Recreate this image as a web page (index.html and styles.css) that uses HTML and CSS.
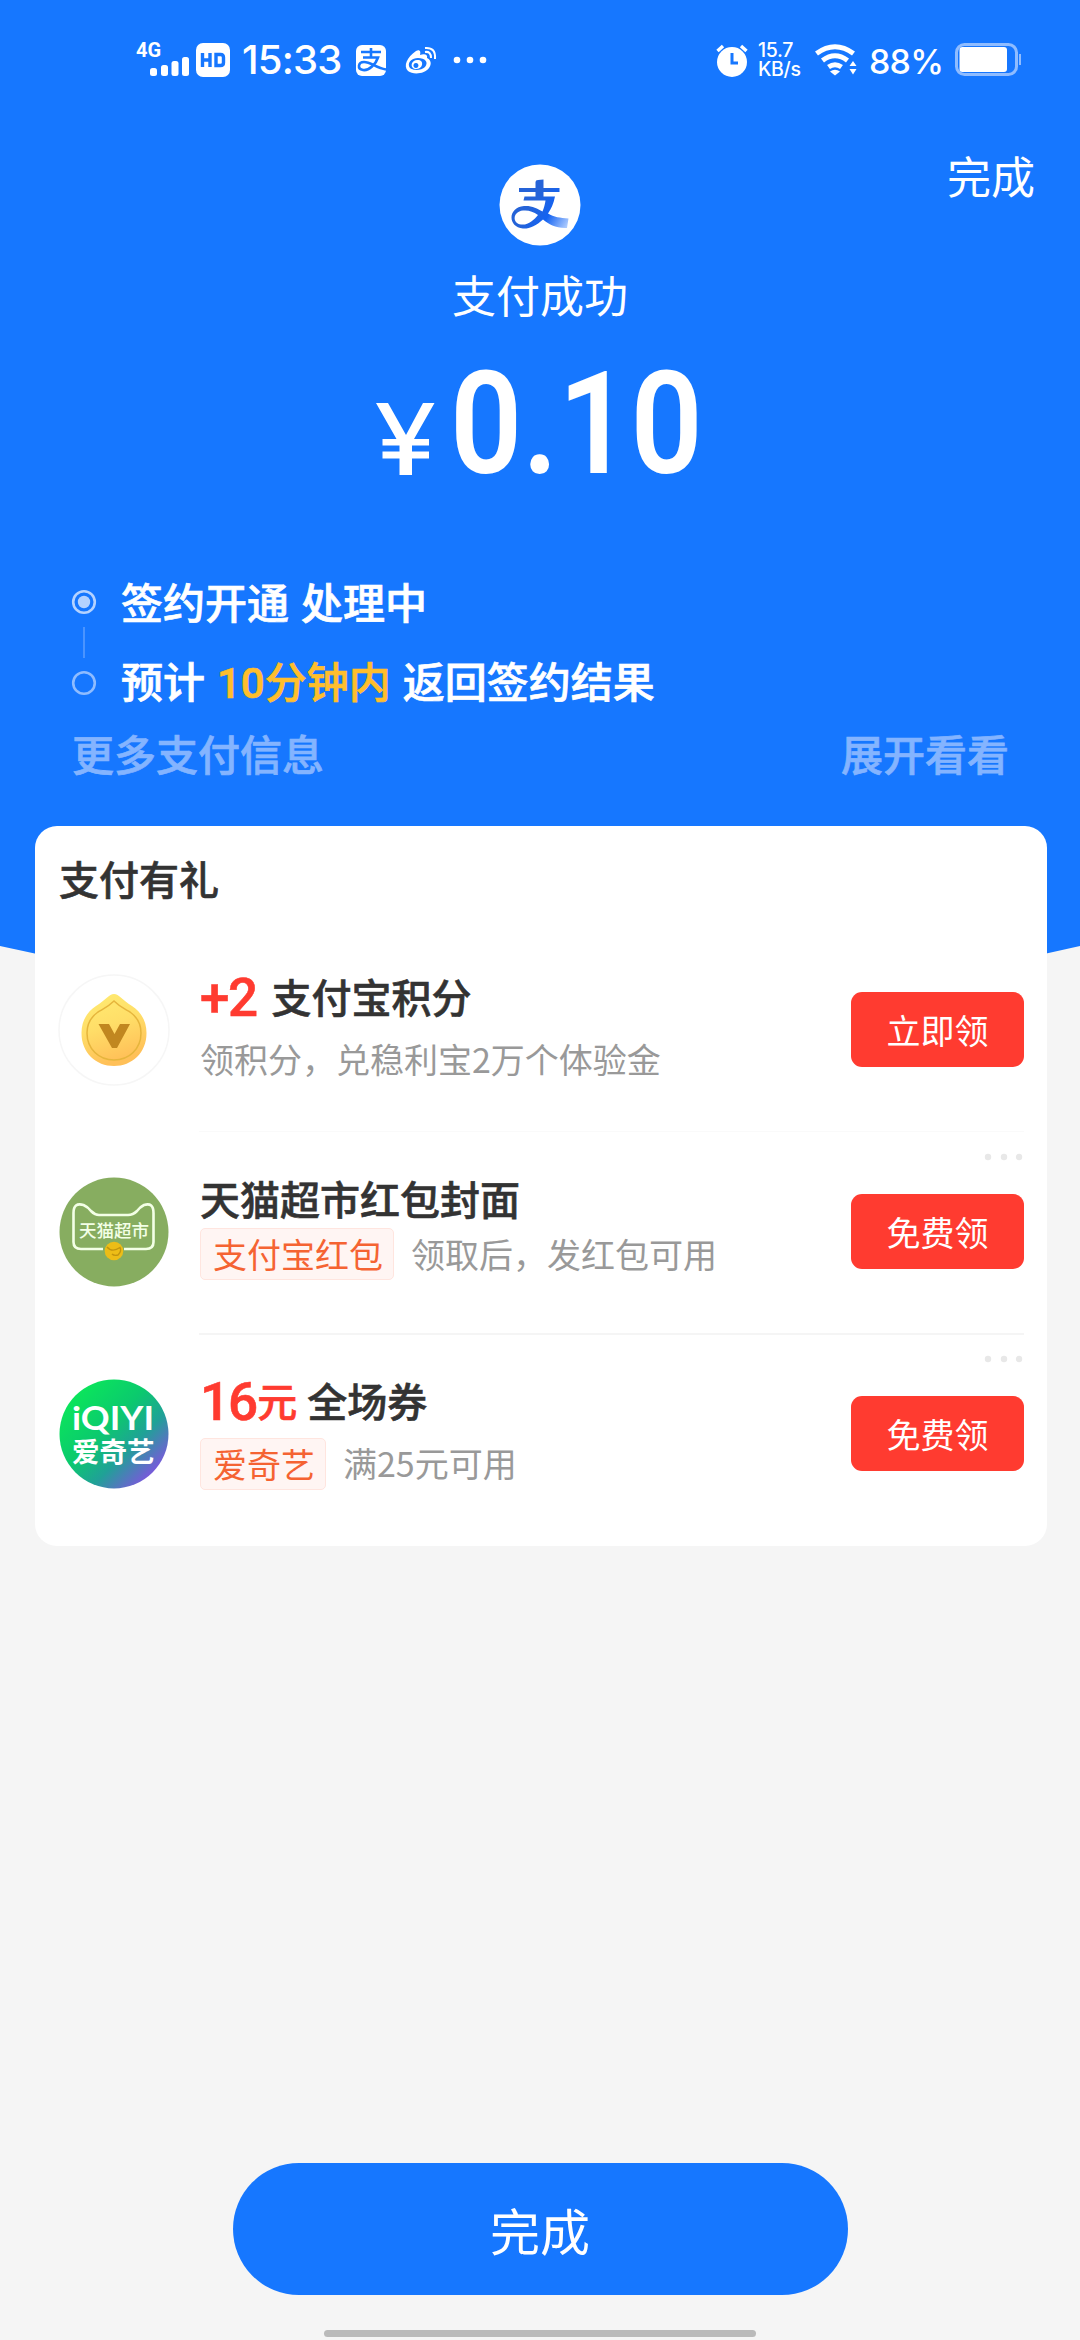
FILE: index.html
```html
<!DOCTYPE html>
<html lang="zh-CN">
<head>
<meta charset="utf-8">
<title>支付成功</title>
<link rel="stylesheet" href="styles.css">
</head>
<body>
<div class="page">
  <svg class="backdrop" viewBox="0 0 1080 1010"><path d="M0 0H1080V946Q540 1070 0 946Z" fill="#1677ff"/></svg>

  <header class="status">
    <div class="status-left">
      <svg class="signal" width="54" height="36" viewBox="0 0 54 36" fill="#fff">
        <text x="0" y="15.500" class="net">4G</text>
        <rect x="14" y="27" width="7" height="8" rx="2.5"/><rect x="25" y="24" width="7" height="11" rx="2.5"/><rect x="35.500" y="20" width="7" height="15" rx="2.500"/><rect x="46" y="16" width="7" height="19" rx="2.500"/>
      </svg>
      <svg class="hd" width="34" height="34" viewBox="0 0 34 34"><rect width="34" height="34" rx="7" fill="#fff"/><path d="M6.500 10V24M14 10V24M6.500 17H14M20 11.500H24.500Q27.500 11.500 27.500 14.500V19.500Q27.500 22.500 24.500 22.500H20Z" fill="none" stroke="#1677ff" stroke-width="3.400"/></svg>
      <span class="clock">15:33</span>
      <svg class="ali" width="30" height="31" viewBox="0 0 30 31"><rect width="30" height="31" rx="6" fill="#fff"/><path d="M15 3V12M5 7H25M7 12.500H22C20 19 13 26 7 25C1 24 2 17 8 17C15 17 20 23 30 24.500" fill="none" stroke="#1677ff" stroke-width="2.600"/></svg>
      <svg class="weibo" width="32" height="28" viewBox="0 0 32 28"><path fill-rule="evenodd" d="M11 4C15 2 16 5 15 8C20 6 23 8 22 11C26 13 27 17 24 21C20 27 8 28 3 24C-2 19 2 10 11 4ZM13 11C7 11 3 15 4 19C5 24 16 24 20 20C24 15 20 11 13 11Z" fill="#fff"/><path fill-rule="evenodd" d="M12 13C7 13.500 5.500 18 7.500 20.500C10 23.500 16 22 17 18C18 14.500 15 12.500 12 13ZM11 16A2.500 2.500 0 1 1 10.900 16Z" fill="#fff"/><path d="M20 5Q26 4 26 11M20 1Q31 0 30 12" fill="none" stroke="#fff" stroke-width="2"/></svg>
      <svg class="more" width="34" height="8" viewBox="0 0 34 8" fill="#fff"><circle cx="4" cy="4" r="3.300"/><circle cx="17" cy="4" r="3.300"/><circle cx="30" cy="4" r="3.300"/></svg>
    </div>
    <div class="status-right">
      <svg class="alarm" width="32" height="34" viewBox="0 0 32 34"><circle cx="16" cy="18" r="15" fill="#fff"/><path d="M1.500 7L7 2M30.500 7L25 2" stroke="#fff" stroke-width="3.400"/><path d="M16 9V19H22" fill="none" stroke="#1677ff" stroke-width="3"/></svg>
      <span class="speed"><span>15.7</span><span>KB/s</span></span>
      <svg class="wifi" width="42" height="32" viewBox="0 0 42 32"><g fill="none" stroke="#fff" stroke-width="5"><path d="M1.500 9.500Q20 -4 38.500 9.500"/><path d="M7.500 16.500Q20 7 32.500 16.500"/><path d="M13.500 23Q20 18.500 26.500 23"/></g><path d="M15 27.500Q20 24 25 27.500L20 31.500Z" fill="#fff"/><path d="M34.500 22L38 17L41.500 22ZM34.500 25H41.500L38 30.500Z" fill="#fff"/></svg>
      <span class="percent">88%</span>
      <svg class="battery" width="66" height="34" viewBox="0 0 66 34"><rect x="1.500" y="1.500" width="60" height="30" rx="8" fill="none" stroke="#8fbcff" stroke-width="3"/><rect x="4.500" y="4" width="47.500" height="25" rx="3" fill="#fff"/><rect x="64" y="11" width="2" height="11" fill="#8fbcff"/></svg>
    </div>
  </header>

  <nav class="top-nav"><span>完成</span></nav>

  <section class="result">
    <svg class="logo" width="82" height="82" viewBox="0 0 82 82">
      <defs><linearGradient id="g" gradientUnits="userSpaceOnUse" x1="34" y1="40" x2="70" y2="62"><stop offset="0" stop-color="#2563d8"/><stop offset=".45" stop-color="#1463f2"/><stop offset="1" stop-color="#b9d3ff"/></linearGradient></defs>
      <circle cx="41" cy="41" r="40.500" fill="#fff"/>
      <path d="M36.500 18Q36.500 16 39 16L44.500 15.500V24H60.500V28H44.500V32.500H56C54.500 40 52 45 49 49.500C55 53 61 54 69.500 54.500L68 64C57 64.500 50 60.500 44 55.500C37 62 30 65 24 64.500C8 63 9 43 25 42C33 41.500 38 44.500 43.500 47.500C45 44 46 40 46.500 36.500H24.500L25.500 32.500H36.500V28H20V24H36.500ZM39 51C34 47.500 30 46 24 46.500C14 47.500 12.500 59 22 60.500C29 61.500 35 56 39 51Z" fill="url(#g)"/>
    </svg>
    <h1 class="state">支付成功</h1>
    <p class="amount"><svg class="yen" width="60" height="72" viewBox="0 0 60 72"><path d="M0 0H12L30 32L47 0H58.500L38 36H53V42.500H36V48.500H53V55.500H36V72H23.500V55.500H6.500V48.500H23.500V42.500H6.500V36H20.500Z" fill="#fff"/></svg><span class="digits">0.10</span></p>
  </section>

  <section class="steps">
    <div class="step"><svg width="26" height="26" viewBox="0 0 26 26"><circle cx="13" cy="13" r="10.800" fill="none" stroke="#b4d2ff" stroke-width="2.600"/><circle cx="13" cy="13" r="6.200" fill="#b4d2ff"/></svg><span>签约开通 处理中</span></div>
    <div class="connector"></div>
    <div class="step"><svg width="26" height="26" viewBox="0 0 26 26"><circle cx="13" cy="13" r="10.800" fill="none" stroke="#8fbcff" stroke-width="2.600"/></svg><span>预计 <em>10分钟内</em> 返回签约结果</span></div>
    <div class="extra"><span>更多支付信息</span><span>展开看看</span></div>
  </section>

  <main class="card">
    <h2 class="card-title">支付有礼</h2>
    <article class="offer">
      <svg class="badge" width="112" height="112" viewBox="0 0 112 112">
        <defs><linearGradient id="coin" x1="0" y1="0" x2=".3" y2="1"><stop offset="0" stop-color="#ffec72"/><stop offset=".5" stop-color="#ffde68"/><stop offset="1" stop-color="#ffc058"/></linearGradient></defs>
        <circle cx="56" cy="56" r="55" fill="#fff" stroke="#f6f6f6" stroke-width="1.500"/>
        <path d="M56 20C61 20 64 26 74 32C83 38 88.500 47 88.500 59C88.500 79 74 92 56 92C38 92 23.500 79 23.500 59C23.500 47 29 38 38 32C48 26 51 20 56 20Z" fill="url(#coin)"/>
        <path d="M56 27C62 33 67 35 72 38C79 43 83 50 83 59C83 75 71 86 56 86C41 86 29 75 29 59C29 50 33 43 40 38C45 35 50 33 56 27Z" fill="none" stroke="#e6b53c" stroke-width="1.500"/>
        <path d="M40.500 50H51L56.500 60L62 50H72L59 74H54Z" fill="#c18720"/>
      </svg>
      <div class="info">
        <h3 class="name"><b class="red plus">+2</b>支付宝积分</h3>
        <p class="meta"><span class="desc">领积分，兑稳利宝2万个体验金</span></p>
      </div>
      <button class="claim">立即领</button>
    </article>
    <article class="offer offer-tight">
      <svg class="badge" width="112" height="112" viewBox="0 0 112 112">
        <circle cx="56" cy="56" r="54.500" fill="#87ad60"/>
        <path d="M45 73H23Q15.500 73 15.500 66V37Q15.500 26 25.500 29Q30 31 33 35Q37 39 41 39H70Q75 39 79 35Q82 31 86 29Q95.500 26 95.500 37V66Q95.500 73 88 73H66" fill="none" stroke="#f3ffe6" stroke-width="2.600"/>
        <text x="21" y="60.500" class="tmall">天猫超市</text>
        <circle cx="56" cy="75" r="9.300" fill="#edbd17"/><path d="M49 71Q54 77 62 71.500Q64 75 60 79Q56 80 54 78" fill="none" stroke="#c2950f" stroke-width="1.400"/>
      </svg>
      <div class="info">
        <h3 class="name">天猫超市红包封面</h3>
        <p class="meta"><span class="tag">支付宝红包</span><span class="desc">领取后，发红包可用</span></p>
      </div>
      <svg class="dots" width="40" height="8" viewBox="0 0 40 8" fill="#e8e8e8"><circle cx="4" cy="4" r="3.200"/><circle cx="20" cy="4" r="3.200"/><circle cx="35" cy="4" r="3.200"/></svg>
      <button class="claim">免费领</button>
    </article>
    <article class="offer">
      <svg class="badge" width="112" height="112" viewBox="0 0 112 112">
        <defs><linearGradient id="iq" x1=".15" y1=".15" x2=".9" y2=".9"><stop offset="0" stop-color="#0be45c"/><stop offset=".38" stop-color="#0bc96e"/><stop offset=".65" stop-color="#20a197"/><stop offset="1" stop-color="#8a4be8"/></linearGradient></defs>
        <circle cx="56" cy="56" r="54.500" fill="url(#iq)"/>
        <text x="14" y="52" class="iq-en" textLength="82" lengthAdjust="spacingAndGlyphs">iQIYI</text>
        <text x="14" y="83.500" class="iq-cn">爱奇艺</text>
      </svg>
      <div class="info">
        <h3 class="name"><b class="red">16</b><b class="unit">元</b>全场券</h3>
        <p class="meta"><span class="tag">爱奇艺</span><span class="desc">满25元可用</span></p>
      </div>
      <svg class="dots" width="40" height="8" viewBox="0 0 40 8" fill="#e8e8e8"><circle cx="4" cy="4" r="3.200"/><circle cx="20" cy="4" r="3.200"/><circle cx="35" cy="4" r="3.200"/></svg>
      <button class="claim">免费领</button>
    </article>
  </main>

  <footer class="bottom">
    <button class="done">完成</button>
    <div class="home-bar"></div>
  </footer>
</div>
</body>
</html>
```

FILE: styles.css
```css
* { box-sizing: border-box; margin: 0; padding: 0; }
body { margin: 0; font-family: "Noto Sans CJK SC", sans-serif; }
button { border: 0; font: inherit; color: #fff; }
svg { display: block; flex: none; overflow: visible; }
.page { position: relative; isolation: isolate; width: 1080px; height: 2340px; display: flex; flex-direction: column; background: #f5f5f5; color: #fff; overflow: hidden; }
.backdrop { position: absolute; top: 0; left: 0; width: 1080px; height: 1010px; z-index: -1; }

.status { height: 120px; display: flex; justify-content: space-between; padding: 0 59px 0 136px; }
.status-left, .status-right { display: flex; height: 120px; }
.signal { margin-top: 41px; }
.net { font: 700 20px Roboto, sans-serif; }
.hd { margin: 43px 0 0 6px; }
.clock { margin: 31px 0 0 12px; width: 102px; font: 500 40px/58px Inter, sans-serif; letter-spacing: -.8px; white-space: nowrap; }
.ali { margin: 45px 0 0 12px; }
.weibo { margin: 47px 0 0 19px; }
.more { margin: 56px 0 0 16px; }
.alarm { margin-top: 44px; }
.speed { display: flex; flex-direction: column; width: 47px; margin: 41px 0 0 10px; font: 500 19.500px/19px Inter, sans-serif; letter-spacing: -.3px; white-space: nowrap; }
.wifi { margin: 44px 0 0 10px; }
.percent { width: 72px; margin: 33px 0 0 12px; font: 500 34px/58px Inter, sans-serif; letter-spacing: -.8px; white-space: nowrap; }
.battery { margin: 43px 0 0 14px; }

.top-nav { height: 44px; display: flex; justify-content: flex-end; padding: 22px 45px 0 0; font-size: 44px; line-height: 66px; }
.result { height: 406px; display: flex; flex-direction: column; align-items: center; }
.state { margin-top: 15px; font-weight: 400; font-size: 44px; line-height: 66px; }
.amount { display: flex; margin-top: 42px; width: 328px; }
.yen { margin: 34px 0 0 0; }
.digits { margin: 3px 0 0 14px; font: 600 143px/104px Roboto, sans-serif; transform: scaleX(.885); transform-origin: 0 0; white-space: nowrap; }

.steps { height: 256px; padding: 1px 72px 0 71px; font-size: 42px; font-weight: 500; -webkit-text-stroke: .7px currentColor; }
.step { display: flex; align-items: center; height: 62px; gap: 24px; line-height: 62px; white-space: pre; word-spacing: 2.500px; }
.step span { margin-top: -3px; }
.step em { font-style: normal; font-family: Roboto, "Noto Sans CJK SC", sans-serif; color: #ffbe2c; }
.connector { width: 2px; height: 31px; margin: -6px 0 -6px 12px; background: #4a94ff; }
.extra { display: flex; justify-content: space-between; margin: 8px -1px 0 1px; line-height: 62px; color: #84b4ff; }

.card { width: 1012px; height: 720px; margin-left: 35px; padding: 0 23px 0 24px; border-radius: 22px; background: #fff; color: #333; }
.card-title { height: 103px; padding-top: 22px; font-size: 40px; font-weight: 500; line-height: 60px; -webkit-text-stroke: .6px currentColor; }
.offer { position: relative; display: flex; height: 202px; }
.offer + .offer::before { content: ""; position: absolute; left: 140px; right: 0; top: 0; height: 2px; background: #f5f5f5; }
.offer.offer-tight::before { height: 1px; background: #fafafa; }
.badge { margin: 45px 0 0 -1px; }
.info { flex: 1; margin-left: 30px; padding-top: 41px; }
.name { height: 52px; display: flex; font-size: 40px; font-weight: 500; line-height: 52px; -webkit-text-stroke: .6px currentColor; }
.red { margin: 2px 12px 0 0; color: #ff3b30; font: 500 53px/52px Roboto, sans-serif; letter-spacing: -2px; }
.plus { margin-right: 15px; letter-spacing: -1.500px; }
.unit { margin: 0 10px 0 -11px; color: #ff3b30; font-weight: 500; }
.meta { display: flex; margin-top: 12px; font-size: 34px; line-height: 50px; color: #999; }
.tag { height: 52px; margin-right: 17px; padding: 0 10px 0 12px; border: 1px solid #ffe5df; border-radius: 5px; background: #fff5f3; color: #f56332; white-space: nowrap; }
.offer-tight .meta { margin-top: 4px; }
.offer-tight .desc { padding-top: 1px; }
.dots { position: absolute; right: 0; top: 22px; }
.claim { width: 173px; height: 75px; margin-top: 63px; border-radius: 11px; background: #ff3b30; font-size: 34px; line-height: 73px; }
.tmall { font-size: 17.500px; font-weight: 500; fill: #f3ffe6; }
.iq-en { font: 700 32px Lato, sans-serif; fill: #fff; }
.iq-cn { font-size: 27.500px; font-weight: 700; fill: #fff; }

.bottom { flex: 1; display: flex; flex-direction: column; align-items: center; padding-top: 617px; }
.done { width: 615px; height: 132px; border-radius: 66px; background: #1677ff; font-size: 50px; line-height: 132px; }
.home-bar { width: 432px; height: 7px; margin-top: 35px; border-radius: 4px; background: #bababa; }
```
